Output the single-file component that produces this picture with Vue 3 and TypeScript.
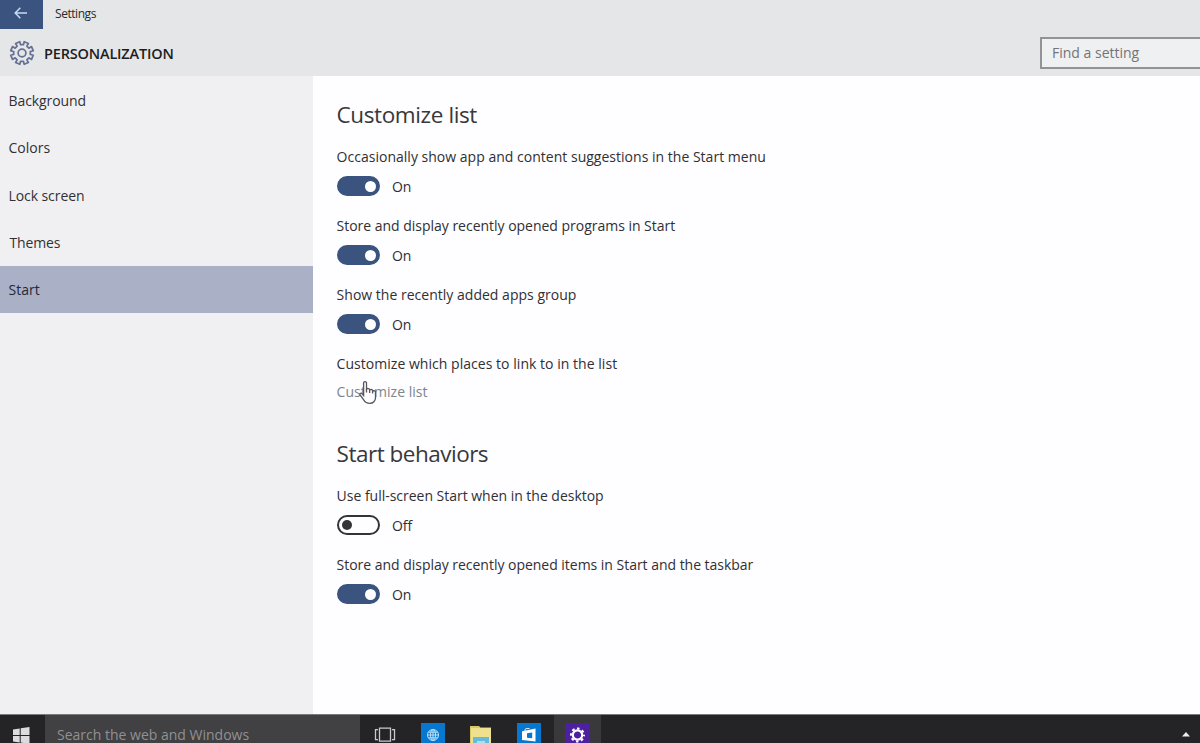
<script setup lang="ts">
interface NavItem { label: string; cls: string; active?: boolean }
interface Setting { label: string; on: boolean; cls: string }

const nav: NavItem[] = [
  { label: 'Background', cls: 'n1' },
  { label: 'Colors', cls: 'n2' },
  { label: 'Lock screen', cls: 'n3' },
  { label: 'Themes', cls: 'n4' },
  { label: 'Start', cls: 'n5', active: true },
]

const listSettings: Setting[] = [
  { label: 'Occasionally show app and content suggestions in the Start menu', on: true, cls: 's1' },
  { label: 'Store and display recently opened programs in Start', on: true, cls: 's2' },
  { label: 'Show the recently added apps group', on: true, cls: 's3' },
]

const behaviorSettings: Setting[] = [
  { label: 'Use full-screen Start when in the desktop', on: false, cls: 's5' },
  { label: 'Store and display recently opened items in Start and the taskbar', on: true, cls: 's6' },
]

// Outline of an eight-toothed gear centred on the origin.
function gear(outer: number, inner: number): string {
  const pts: string[] = []
  for (let i = 0; i < 8; i++) {
    const mid = ((i + 0.5) * Math.PI) / 4
    const corners: [number, number][] = [[inner, -0.22], [outer, -0.2], [outer, 0.2], [inner, 0.22]]
    for (const [r, off] of corners) {
      const a = mid + off
      pts.push(`${(r * Math.cos(a)).toFixed(2)} ${(r * Math.sin(a)).toFixed(2)}`)
    }
  }
  return `M${pts.join('L')}Z`
}

const headerGear = gear(11.5, 8.4)
</script>

<template>
  <div class="screen">
    <header class="header">
      <div class="titlebar">
        <button class="back" aria-label="Back">
          <svg width="14" height="12" viewBox="0 0 14 12"><path d="M6.3 .8 1.2 6l5.1 5.2M1.3 6H13" /></svg>
        </button>
        <span class="app-name">Settings</span>
      </div>
      <div class="heading-row">
        <svg class="gear" width="26" height="26" viewBox="-13 -13 26 26">
          <path :d="headerGear" /><circle r="3.900" />
        </svg>
        <h1>PERSONALIZATION</h1>
        <div class="find"><span>Find a setting</span></div>
      </div>
    </header>

    <div class="body">
      <nav class="sidebar">
        <a v-for="n in nav" :key="n.label" class="nav-item" :class="{ active: n.active }">
          <span :class="n.cls">{{ n.label }}</span>
        </a>
      </nav>
      <main class="content">
        <section>
          <h2 class="h-list">Customize list</h2>
          <div v-for="s in listSettings" :key="s.label" class="setting">
            <div class="label"><span :class="s.cls">{{ s.label }}</span></div>
            <div class="control">
              <span class="toggle" :class="{ on: s.on }"><i /></span>
              <span class="state">{{ s.on ? 'On' : 'Off' }}</span>
            </div>
          </div>
          <div class="setting link-setting">
            <div class="label"><span class="s4">Customize which places to link to in the list</span></div>
            <a class="link"><span>Customize list</span>
              <svg class="cursor" width="20" height="26" viewBox="0 0 20 26">
                <path d="M5.6 15.5V3.1c0-2 2.900-2 2.900 0v6l1.100-.7 1.700.6.4.8 1.400-.4 1.400.6.4 1 1.200-.3 1.400.8v6.300c0 3-2.400 5.600-5.600 5.600-3 0-4.900-1.200-6.200-3.500L1.900 14.700c-.4-1.500 1.400-2.100 2.300-.9z" />
                <path d="M8.500 9v3.500M11.600 9.600V13M14.600 10.500v3" />
              </svg>
            </a>
          </div>
        </section>
        <section class="behaviors">
          <h2 class="h-behav">Start behaviors</h2>
          <div v-for="s in behaviorSettings" :key="s.label" class="setting">
            <div class="label"><span :class="s.cls">{{ s.label }}</span></div>
            <div class="control">
              <span class="toggle" :class="{ on: s.on }"><i /></span>
              <span class="state">{{ s.on ? 'On' : 'Off' }}</span>
            </div>
          </div>
        </section>
      </main>
    </div>

    <footer class="taskbar">
      <div class="start">
        <svg width="17" height="17" viewBox="0 0 17 17"><path d="M0 2.4 6.700 1.400V7.900H0zM7.700 1.200 16.500 0V7.900H7.700zM0 8.900H6.700V15.400L0 14.400zM7.700 8.900H16.500V16.800L7.700 15.600z" /></svg>
      </div>
      <div class="search"><span>Search the web and Windows</span></div>
      <div class="task">
        <svg width="22" height="16" viewBox="0 0 22 16" class="taskview"><path d="M5.500 1.200h11v13h-11zM4 2.700H1.500v10H4M18 2.700h2.500v10H18" /></svg>
      </div>
      <div class="task">
        <svg width="24" height="24" viewBox="0 0 24 24">
          <path fill="#0877cf" d="M0 0h24v24H0z" />
          <g fill="none" stroke="#b9e2fa" stroke-width="1"><circle cx="12" cy="12" r="5.500" /><ellipse cx="12" cy="12" rx="2.500" ry="5.500" /><path d="M6.500 12h11M12 6.500v11M7.400 9.200h9.200M7.400 14.800h9.200" /></g>
        </svg>
      </div>
      <div class="task">
        <svg width="22" height="22" viewBox="0 0 22 22" class="folder">
          <path fill="#d9c76a" d="M0 0h9l1.500 1.500H21V22H0z" /><path fill="#eee08c" d="M1 2h20V22H1z" />
          <path fill="#66bbdc" d="M3 11h16v11H3z" /><path fill="#a9dff0" d="M7 15h8v7H7z" />
        </svg>
      </div>
      <div class="task">
        <svg width="24" height="24" viewBox="0 0 24 24">
          <path fill="#0877cf" d="M0 0h24v24H0z" />
          <path fill="#fff" d="M5 8.200 18.500 5.500v13L5 17z" />
          <path fill="none" stroke="#d5eafa" d="M8 8V7Q8 5.500 10 5.500h2.500" />
          <path fill="#0877cf" d="M10 10.200 15.200 9.600v5.600L10 14.700z" />
        </svg>
      </div>
      <div class="task current">
        <svg width="25" height="24" viewBox="-12.500 -12 25 24">
          <path fill="#4c20a0" d="M-12.500-12h25v24h-25z" />
          <circle r="4.700" fill="none" stroke="#fff" stroke-width="2.200" />
          <circle r="6.500" fill="none" stroke="#fff" stroke-width="2" stroke-dasharray="2.550 2.555" stroke-dashoffset="1.270" />
        </svg>
      </div>
      <svg class="tray" width="8" height="5" viewBox="0 0 8 5"><path d="M4 0 8 4.500H0z" /></svg>
    </footer>
  </div>
</template>

<style>
html, body { margin: 0; overflow: hidden; }
</style>

<style scoped>
* { box-sizing: border-box; }
.screen {
  width: 1200px; height: 743px; overflow: hidden; display: flex; flex-direction: column;
  font-family: "Open Sans", "Noto Sans", sans-serif; font-size: 14px; color: #303033; background: #fefdff; white-space: nowrap;
}
.header { height: 76px; flex: none; background: #e5e6e8; }
.titlebar { height: 29px; display: flex; align-items: center; }
.back { width: 43px; height: 29px; padding: 0 2px 3px 0; border: 0; background: #3a547f; display: flex; align-items: center; justify-content: center; }
.back path { fill: none; stroke: #c5dbf3; stroke-width: 1.500; }
.app-name { margin-left: 12px; padding-bottom: 2px; font-size: 12px; letter-spacing: -.45px; color: #29292b; }
.heading-row { height: 47px; display: flex; align-items: center; padding-left: 8.500px; }
.gear { fill: none; stroke: #667093; stroke-width: 1.700; stroke-linejoin: round; }
h1 { margin: 2px 0 0 9.500px; font-size: 14.500px; line-height: 20px; font-weight: 600; letter-spacing: -.17px; color: #1d1d20; }
.find { margin-left: auto; width: 160px; height: 32px; border: 2px solid #929396; border-right: 0; background: #eff0f2; padding-left: 10px; display: flex; align-items: center; color: #737477; }
.body { flex: 1; min-height: 0; display: flex; }
.sidebar { width: 313px; background: #f0f0f3; padding-top: 1px; }
.nav-item { height: 47.250px; padding: 0 0 0 8.500px; display: flex; align-items: center; }
.n4 { margin-left: 1px; letter-spacing: -.15px; }
.n1, .n3 { letter-spacing: -.08px; }
.nav-item.active { background: #aab0c6; color: #24283a; }
.content { padding: 22px 0 0 23.600px; }
h2 { margin: 0; height: 34px; line-height: 34px; font-weight: 400; font-size: 22.500px; color: #38383b; }
.h-list { letter-spacing: -.4px; }
.h-behav { letter-spacing: -.5px; }
.setting { height: 69px; }
section .setting:first-of-type { margin-top: 14px; }
.label { height: 22px; line-height: 22px; }
.s1, .s3 { letter-spacing: .015px; }
.s2, .s5 { letter-spacing: -.02px; }
.s4 { letter-spacing: .035px; }
.s6 { letter-spacing: -.025px; }
.control { margin-top: 8px; height: 20px; display: flex; align-items: center; }
.toggle { width: 43px; height: 20px; border: 2px solid #343437; border-radius: 10px; display: flex; align-items: center; padding: 0 3px; }
.toggle i { width: 10px; height: 10px; border-radius: 50%; background: #343437; }
.toggle.on { background: #3a547f; border-color: #3a547f; justify-content: flex-end; padding-right: 2px; }
.toggle.on i { background: #fff; width: 11px; height: 11px; }
.state { margin-left: 12.400px; }
.link { position: relative; display: inline-block; margin-top: 6px; line-height: 22px; color: #7b858d; }
.cursor { position: absolute; left: 21px; top: -1px; }
.cursor path { fill: #fefdff; stroke: #55565a; stroke-width: 1.300; }
.behaviors { margin-top: 15px; }
.taskbar { height: 29px; flex: none; background: #242326; border-top: 1px solid #777b7b; display: flex; overflow: hidden; }
.start { width: 45px; padding: 12px 0 0 13px; }
.start path { fill: #dcdcde; }
.search { width: 315px; background: #414042; padding: 12px 0 0 12px; line-height: 16px; color: #919093; height: 28px; }
.task { width: 48px; height: 28px; flex: none; display: flex; justify-content: center; padding: 8px 0 0 2px; }
.task .taskview { margin-top: 4px; fill: none; stroke: #c9c9ca; stroke-width: 1.300; }
.task .folder { margin-top: 3px; }
.task.current { width: 47px; margin-left: 2px; padding-left: 0; padding-right: 1px; background: #39383b; }
.tray { margin: 17px 10px 0 auto; fill: #eee; }
</style>
